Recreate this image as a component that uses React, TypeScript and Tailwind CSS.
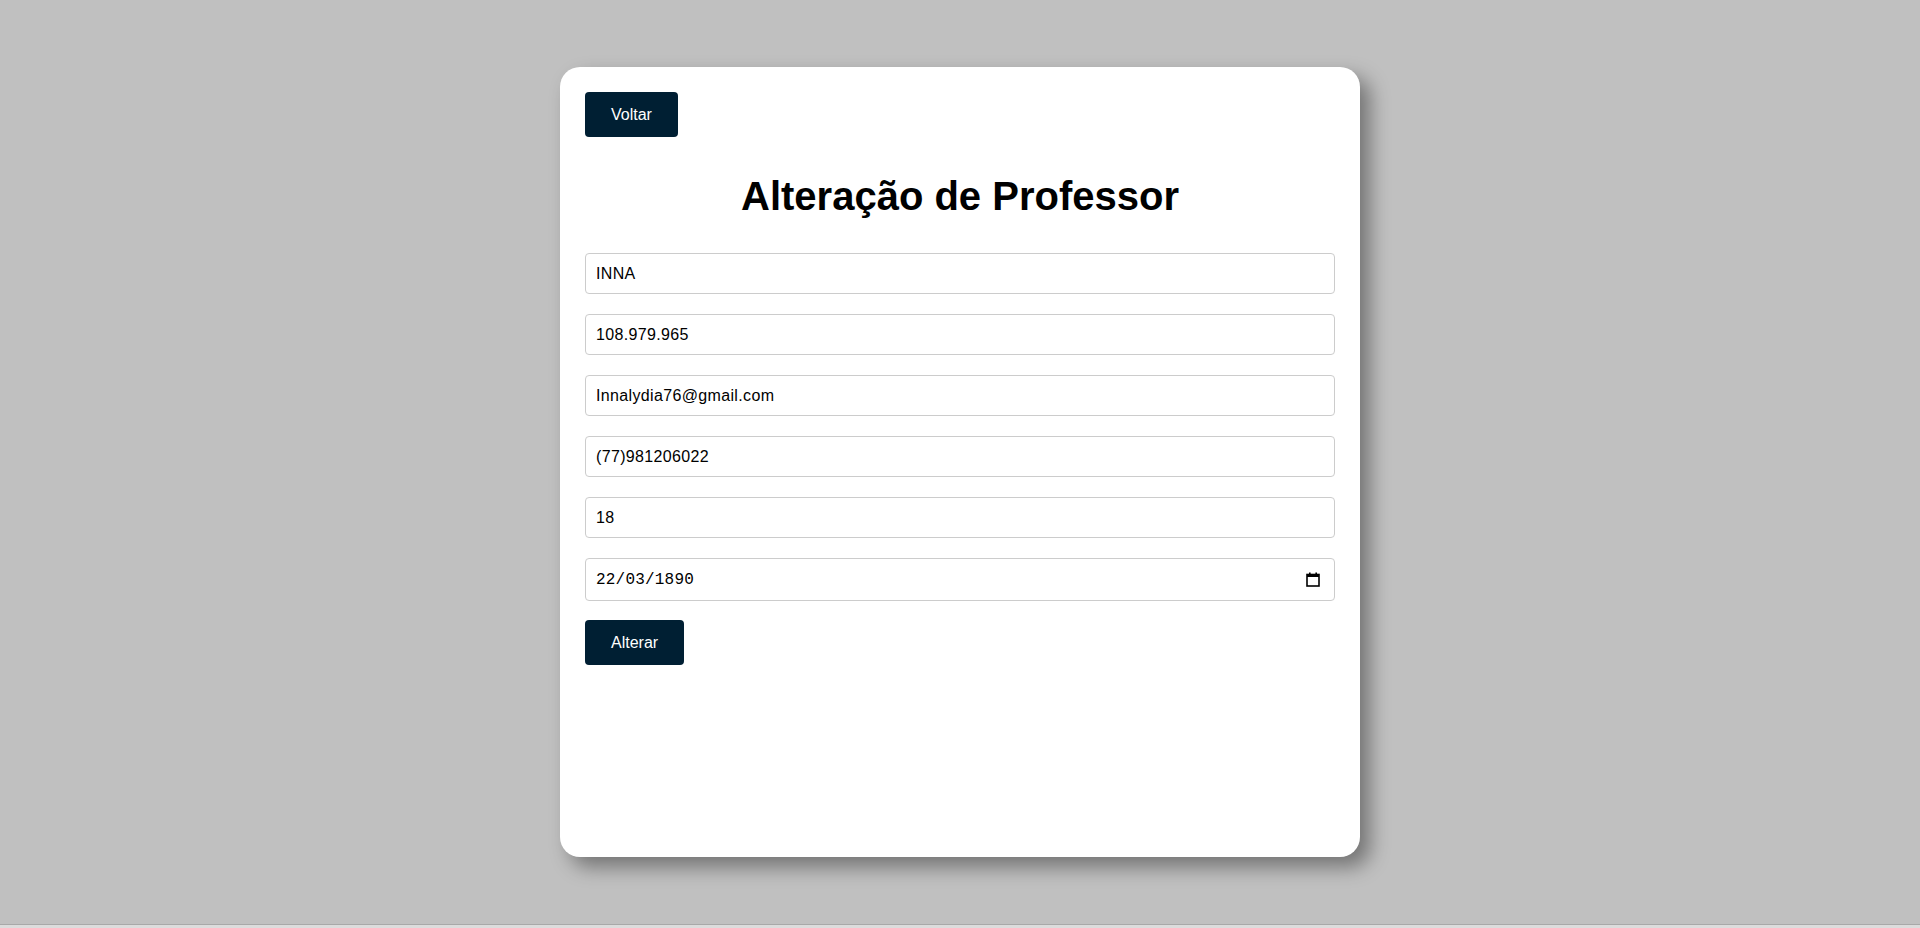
const fields = ["INNA", "108.979.965", "Innalydia76@gmail.com", "(77)981206022", "18"];

const CalendarIcon = () => (
  <svg width="14" height="15" viewBox="0 0 14 15" fill="none" className="text-black">
    <rect x="1" y="2.5" width="12" height="11.5" stroke="currentColor" strokeWidth="1.6" />
    <rect x="1" y="2.5" width="12" height="2.5" fill="currentColor" />
    <rect x="3" y="0.5" width="1.6" height="3" fill="currentColor" />
    <rect x="9.4" y="0.5" width="1.6" height="3" fill="currentColor" />
  </svg>
);

const App = () => {
  return (
    <div className="font-['Liberation_Sans',Arial,sans-serif]">
      <div className="h-[924px] bg-[#c0c0c0] flex justify-center pt-[67px]">
        {/* card */}
        <div className="w-[800px] h-[790px] bg-white rounded-[20px] shadow-[10px_10px_20px_rgba(0,0,0,0.4)] p-[25px] flex flex-col">
          <div>
            <button className="bg-[#001f33] text-white text-base leading-[19px] px-[26px] py-[13px] rounded-[4px]">
              Voltar
            </button>
          </div>

          <h1 className="text-center text-[40px] font-bold text-black leading-[46px] mt-[36px] mb-[34px]">
            Alteração de Professor
          </h1>

          {/* form */}
          <form className="flex flex-col gap-[20px]">
            {fields.map((value) => (
              <input
                key={value}
                readOnly
                value={value}
                className="h-[41px] border border-[#cccccc] rounded-[4px] px-[10px] text-base tracking-[0.35px] text-black outline-none font-['Liberation_Sans',Arial,sans-serif]"
              />
            ))}
            <div className="h-[43px] border border-[#cccccc] rounded-[4px] pl-[10px] pr-[14px] flex items-center justify-between">
              <span className="text-base text-black tracking-[0.2px] font-['Liberation_Mono','DejaVu_Sans_Mono',monospace]">
                22/03/1890
              </span>
              <CalendarIcon />
            </div>
            <div className="-mt-[1px]">
              <button
                type="button"
                className="bg-[#001f33] text-white text-base leading-[19px] px-[26px] py-[13px] rounded-[4px]"
              >
                Alterar
              </button>
            </div>
          </form>
        </div>
      </div>
      <div className="h-[4px] border-t border-[#a8a8a8] bg-[#dcdcdc]" />
    </div>
  );
};

export default App;
